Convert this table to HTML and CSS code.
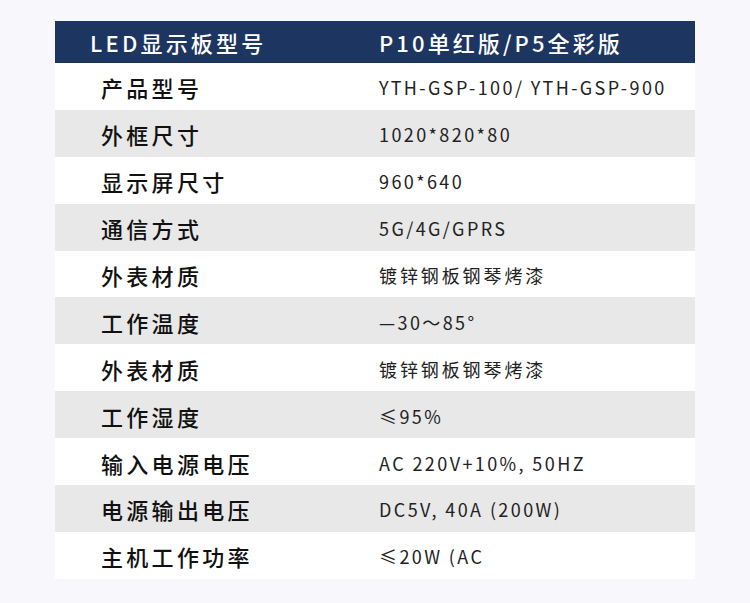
FILE: index.html
```html
<!DOCTYPE html>
<html lang="zh-CN">
<head>
<meta charset="utf-8">
<title>LED显示板型号</title>
<link rel="stylesheet" href="styles.css">
</head>
<body>
<div class="page">
  <div class="spec">
    <div class="row head">
      <div class="k">LED显示板型号</div>
      <div class="v">P10单红版/P5全彩版</div>
    </div>
    <div class="row"><div class="k">产品型号</div><div class="v">YTH-GSP-100/ YTH-GSP-900</div></div>
    <div class="row alt"><div class="k">外框尺寸</div><div class="v">1020*820*80</div></div>
    <div class="row"><div class="k">显示屏尺寸</div><div class="v">960*640</div></div>
    <div class="row alt"><div class="k">通信方式</div><div class="v">5G/4G/GPRS</div></div>
    <div class="row"><div class="k">外表材质</div><div class="v cjk">镀锌钢板钢琴烤漆</div></div>
    <div class="row alt"><div class="k">工作温度</div><div class="v">—30～85°</div></div>
    <div class="row"><div class="k">外表材质</div><div class="v cjk">镀锌钢板钢琴烤漆</div></div>
    <div class="row alt"><div class="k">工作湿度</div><div class="v">≤95%</div></div>
    <div class="row"><div class="k">输入电源电压</div><div class="v">AC 220V+10%, 50HZ</div></div>
    <div class="row alt"><div class="k">电源输出电压</div><div class="v">DC5V, 40A (200W)</div></div>
    <div class="row"><div class="k">主机工作功率</div><div class="v">≤20W (AC</div></div>
  </div>
</div>
</body>
</html>
```
FILE: styles.css
```css
html, body {
  margin: 0;
  padding: 0;
  background: #f7f7fc;
}
body {
  font-family: "Noto Sans CJK SC", "Noto Sans", sans-serif;
  width: 750px;
  height: 603px;
  overflow: hidden;
}
.page {
  padding: 21px 55px 0 55px;
}
.spec {
  width: 640px;
  display: flex;
  flex-direction: column;
}
.row {
  display: grid;
  grid-template-columns: 324px 1fr;
  align-items: center;
  height: 46.9px;
  background: #ffffff;
}
.row.alt {
  background: #e8e8e8;
}
.row.head {
  height: 42px;
  background: #1d3561;
  color: #ffffff;
}
.k {
  padding-left: 46px;
  font-size: 22px;
  font-weight: 500;
  letter-spacing: 3.3px;
  color: #111111;
  line-height: 1;
  padding-top: 2px;
}
.v {
  font-size: 18px;
  font-weight: 400;
  letter-spacing: 2.4px;
  color: #222222;
  line-height: 1;
  padding-top: 2px;
}
.v.cjk {
  letter-spacing: 2.9px;
}
.head .k {
  padding-left: 35px;
  color: #ffffff;
  font-weight: 500;
  letter-spacing: 3.2px;
  padding-top: 0;
}
.head .v {
  font-size: 22px;
  font-weight: 500;
  letter-spacing: 3.1px;
  color: #ffffff;
  padding-top: 0;
}
```
